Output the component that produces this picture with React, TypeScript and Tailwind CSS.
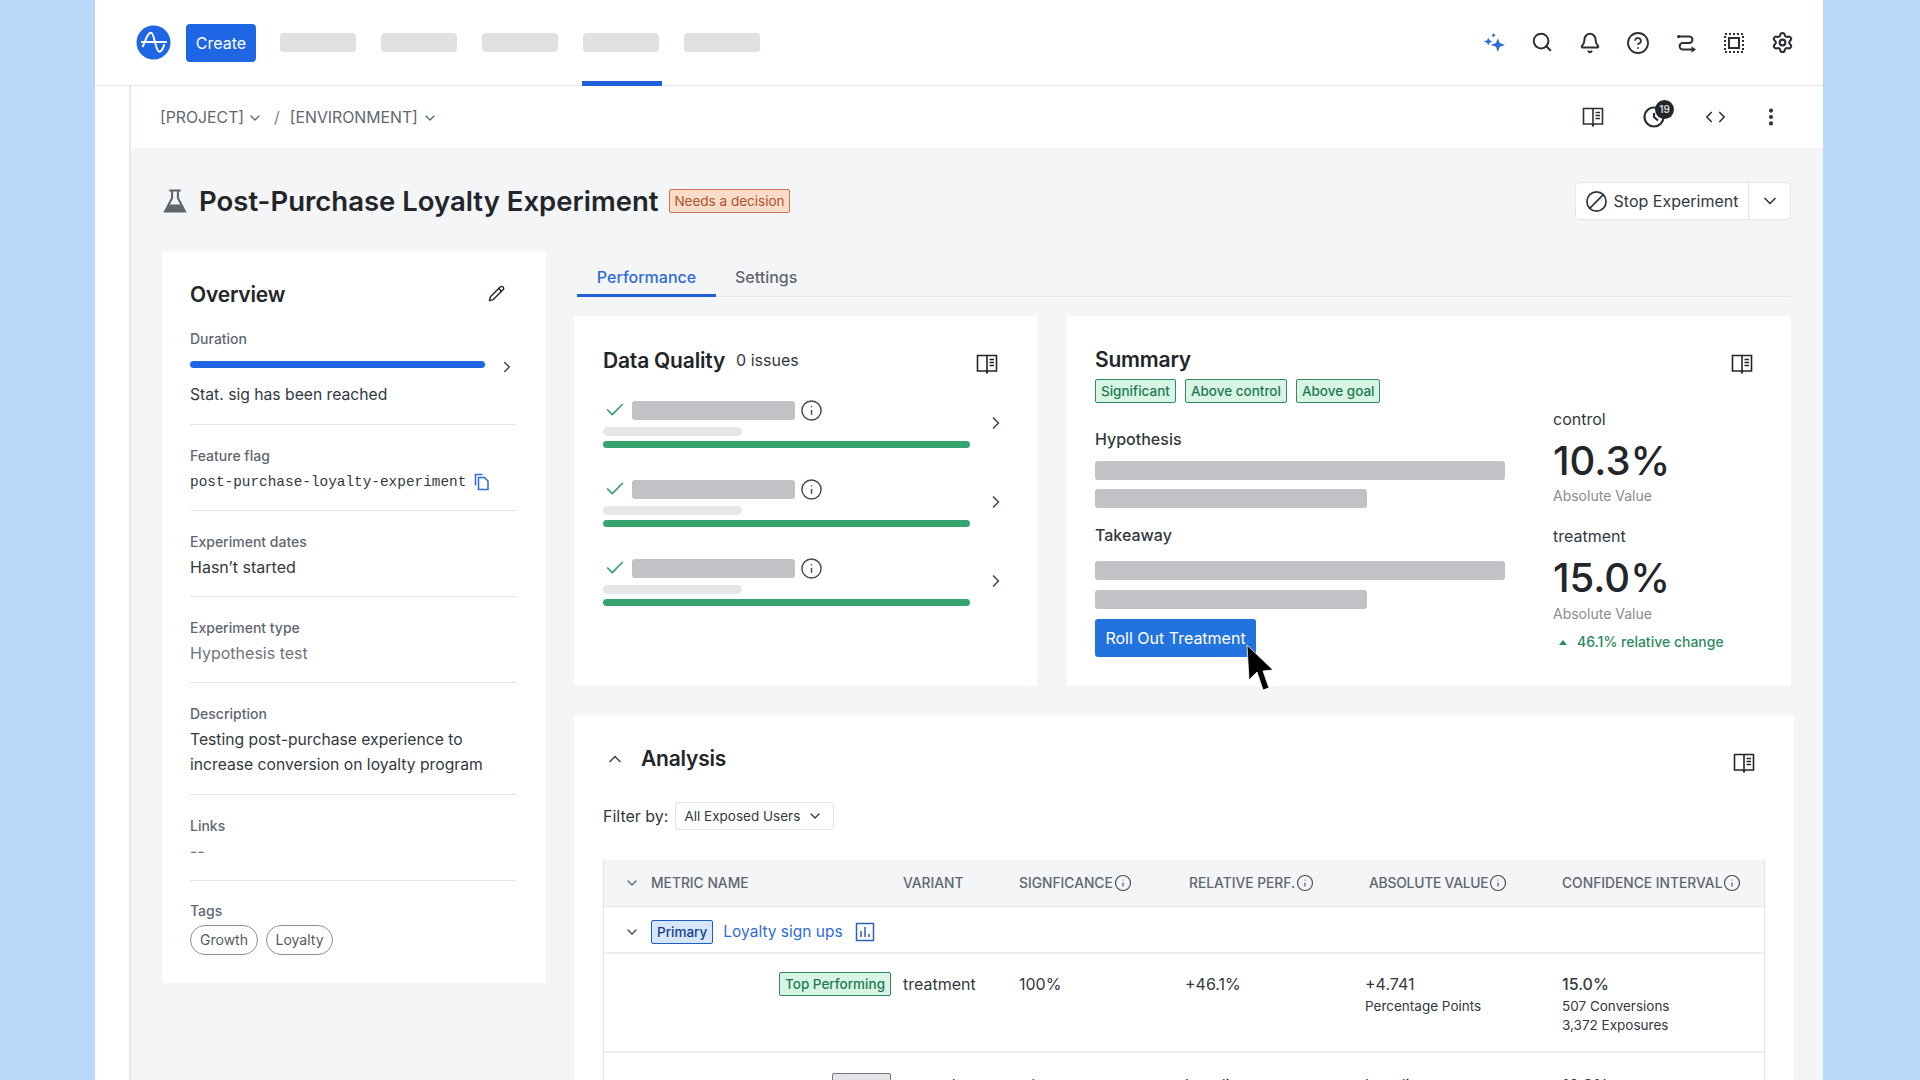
import {
  Ban,
  Bell,
  Check,
  ChevronDown,
  ChevronLeft,
  ChevronRight,
  ChevronUp,
  CircleHelp,
  EllipsisVertical,
  Info,
  Pencil,
  Search,
  Settings,
} from "lucide-react";

const font = { fontFamily: '"Inter", "Noto Sans", sans-serif' };
const tableCols = "grid-cols-[299px_116px_166px_180px_197px_1fr]";

function BookIcon({ className = "" }: { className?: string }) {
  return (
    <svg viewBox="0 0 22 22" fill="none" stroke="currentColor" strokeWidth="1.600" className={`h-[22px] w-[22px] ${className}`}>
      <path d="M11 2.500H1.500v15.500H11m0-15.500h9.500v15.500H11m0-15.500V20" />
      <path d="M9.500 18.500h3L11 21.500Z" fill="currentColor" stroke="none" />
      <path d="M13.500 6.500h4.500M13.500 9.500h4.500M13.500 12.500h4.500" strokeWidth="1.300" />
    </svg>
  );
}

function Logo() {
  return (
    <svg viewBox="0 0 36 36" className="h-[35px] w-[35px]">
      <circle cx="18" cy="18" r="17.500" fill="#1f66e5" />
      <path
        d="M7 22C10 15 12 8 15.500 8 19 8 20 27.500 24 27.500 26.500 27.500 28 23.500 29 20.500M6 17.500H31"
        fill="none"
        stroke="#fff"
        strokeWidth="2"
        strokeLinecap="round"
      />
    </svg>
  );
}

function Sparkles() {
  return (
    <svg viewBox="0 0 24 24" fill="#2f6bd9" className="h-[23px] w-[23px]">
      <path d="M15.500 7.500 17.500 12.500 23 14.500 17.500 16.500 15.500 22 13.500 16.500 8 14.500 13.500 12.500Z" />
      <path d="M5.500 7 6.800 9.700 10 11 6.800 12.300 5.500 15 4.200 12.300 1 11 4.200 9.700Z" />
      <path d="M11 2 11.800 3.700 13.500 4.500 11.800 5.300 11 7 10.200 5.300 8.500 4.500 10.200 3.700Z" />
    </svg>
  );
}

function RouteIcon() {
  return (
    <svg viewBox="0 0 24 24" fill="none" stroke="#2b2f36" strokeWidth="2.200" className="h-[22px] w-[22px]">
      <path d="M4 5H15.500a3.500 3.500 0 0 1 0 7h-7a3.500 3.500 0 0 0 0 7H19" />
      <path d="M18 15.500 23 19l-5 3.500Z" fill="#2b2f36" stroke="none" />
      <circle cx="4" cy="5" r="1.800" fill="#2b2f36" stroke="none" />
    </svg>
  );
}

function SelectionIcon() {
  return (
    <svg viewBox="0 0 22 22" fill="none" stroke="#2b2f36" className="h-[22px] w-[22px]">
      <rect x="2" y="2" width="18" height="18" strokeWidth="2" strokeDasharray="2 2" />
      <rect x="6" y="6" width="10" height="10" strokeWidth="2" />
    </svg>
  );
}

function FlaskIcon() {
  return (
    <svg viewBox="0 0 24 24" fill="none" stroke="#5f6670" strokeWidth="1.800" className="ml-[-1px] h-[28px] w-[28px]">
      <path d="M7 3h10M9.500 3v6.500L3.500 21h17l-6-11.500V3" />
      <path d="M7 15h10l2.500 5.500h-15Z" fill="#5f6670" stroke="none" />
    </svg>
  );
}

function CopyIcon() {
  return (
    <svg viewBox="0 0 18 18" fill="none" stroke="#2f6bd9" strokeWidth="1.500" className="h-[18px] w-[18px]">
      <path d="M2.500 12.500V1.500h7" />
      <path d="M5.500 4.500h6l3.500 3.500v8.500H5.500Z" />
    </svg>
  );
}

function ChartIcon() {
  return (
    <svg viewBox="0 0 20 20" fill="none" stroke="#2f5fb3" strokeWidth="1.500" className="h-[20px] w-[20px]">
      <rect x="1.500" y="1.500" width="17" height="17" />
      <path d="M6 15V9M10 15V5M14 15v-3" />
    </svg>
  );
}

function StatusTag({ children }: { children: string }) {
  return (
    <span className="flex h-6 items-center rounded-[2px] border border-[#2e8a62] bg-[#d8f5e4] px-[5px] text-[13.500px] font-medium text-[#1f7a54]">
      {children}
    </span>
  );
}

function Field({ label, children }: { label: string; children: React.ReactNode }) {
  return (
    <div className="border-b border-[#e3e5e8] pt-[21px] pb-[17px]">
      <p className="h-5 text-sm leading-5 font-medium text-[#5f6670]">{label}</p>
      <div className="mt-[3px] text-base leading-6 text-[#33383f]">{children}</div>
    </div>
  );
}

function QualityRow() {
  return (
    <div className="flex h-[79px] items-start">
      <div className="w-[367px]">
        <div className="flex h-5 items-center">
          <Check className="ml-[1px] h-[22px] w-[22px] text-[#35a072]" strokeWidth={1.800} />
          <div className="ml-[6px] h-[19px] w-[163px] rounded-[3px] bg-[#c0c2c5]" />
          <Info className="ml-[5px] h-[23px] w-[23px] text-[#444a52]" strokeWidth={1.500} />
        </div>
        <div className="mt-[7px] h-[9px] w-[139px] rounded-full bg-[#e5e6e8]" />
        <div className="mt-[5px] h-[7px] rounded-full bg-[#37a36f]" />
      </div>
      <ChevronRight className="mt-[13px] ml-[16px] h-5 w-5 text-[#444a52]" strokeWidth={2} />
    </div>
  );
}

function HeaderCell({ label, pad }: { label: string; pad?: string }) {
  return (
    <div className={`flex items-center gap-[1px] text-[13.800px] font-medium text-[#5f6670] ${pad ?? ""}`}>
      {label}
      <Info className="h-[18px] w-[18px] text-[#444a52]" strokeWidth={1.500} />
    </div>
  );
}

export default function App() {
  const topIcons = [
    <Sparkles key="sparkles" />,
    <Search key="search" className="-mt-[2px] h-[22px] w-[22px]" strokeWidth={2.200} />,
    <Bell key="bell" className="h-[22px] w-[22px]" strokeWidth={2.200} />,
    <CircleHelp key="help" className="h-[24px] w-[24px]" strokeWidth={1.800} />,
    <RouteIcon key="route" />,
    <SelectionIcon key="selection" />,
    <Settings key="settings" className="h-[23px] w-[23px]" strokeWidth={2.200} />,
  ];

  return (
    <div className="h-screen overflow-hidden bg-[#bad9fa] px-[95px] pr-[97px]" style={font}>
      <div className="relative h-full bg-[#f4f5f7]">
        <header className="flex h-[86px] items-center border-b border-[#e6e7e9] bg-white pr-[17px] pl-[41px] shadow-[0_1px_3px_rgba(0,0,0,0.06)]">
          <Logo />
          <button className="ml-[15px] h-[38px] w-[70px] rounded bg-[#1f66e5] text-base text-white">Create</button>
          <nav className="ml-6 flex gap-[25px]">
            {[0, 1, 2, 3, 4].map((n) => (
              <div key={n} className="h-[19px] w-[76px] rounded-[4px] bg-[#dfe1e3]" />
            ))}
          </nav>
          <div className="ml-auto flex items-center text-[#2b2f36]">
            {topIcons.map((icon) => (
              <div key={icon.key} className="flex w-12 justify-center">
                {icon}
              </div>
            ))}
          </div>
          <div className="absolute top-[81px] left-[487px] h-[5px] w-[80px] bg-[#1f5fd9]" />
        </header>

        <div className="flex h-[994px]">
          <div className="w-[36px] border-r-2 border-[#e8e9eb] bg-white" />
          <div className="min-w-0 flex-1">
            <div className="flex h-[62px] items-center bg-white pr-[41px] pl-[29px] text-[#5f6670]">
              <div className="flex translate-y-px items-center text-[15.800px]">
                <span>[PROJECT]</span>
                <ChevronDown className="ml-[3px] h-4 w-4" />
                <span className="ml-[11px] text-[#7b818a]">/</span>
                <span className="ml-[10px]">[ENVIRONMENT]</span>
                <ChevronDown className="ml-1 h-4 w-4" />
              </div>
              <div className="ml-auto flex items-center text-[#2b2f36]">
                <BookIcon className="mr-[38px]" />
                <div className="relative mr-[34px]">
                  <svg viewBox="0 0 24 24" fill="none" stroke="#2b2f36" strokeWidth="2.200" className="h-6 w-6">
                    <circle cx="12" cy="12" r="9.500" />
                    <path d="M12 8v4l4 3.500" />
                  </svg>
                  <span className="absolute top-[-5px] left-[13px] flex h-[19px] w-[19px] items-center justify-center rounded-full bg-[#23262b] text-[10px] font-semibold text-[#d5d7da]">
                    19
                  </span>
                </div>
                <div className="mr-[29px] flex items-center">
                  <ChevronLeft className="-mr-1 h-[18px] w-[18px]" strokeWidth={2.200} />
                  <ChevronRight className="-ml-[1px] h-[18px] w-[18px]" strokeWidth={2.200} />
                </div>
                <EllipsisVertical className="h-[22px] w-[22px]" strokeWidth={2.500} />
              </div>
            </div>

            <div className="pr-[32px] pl-[31px]">
              <div className="mt-[35px] flex h-[36px] items-center">
                <div className="flex w-[36px] items-center">
                  <FlaskIcon />
                </div>
                <h1 className="ml-[1px] text-[27.500px] leading-9 font-semibold text-[#22262b]">Post-Purchase Loyalty Experiment</h1>
                <span className="ml-[11px] flex h-6 items-center rounded-[2px] border border-[#c9744c] bg-[#fcdcc8] px-[4px] text-[13.500px] text-[#a9552e]">
                  Needs a decision
                </span>
                <div className="mr-[1px] ml-auto flex h-[36px] items-center rounded bg-white text-[#33383f] shadow-[0_0_2px_rgba(0,0,0,0.2)]">
                  <div className="flex h-full w-[173px] items-center justify-center gap-[6px] border-r border-[#e3e5e8] pr-[1px] text-base">
                    <Ban className="h-[23px] w-[23px] -scale-x-100" strokeWidth={1.800} />
                    Stop Experiment
                  </div>
                  <div className="flex w-[41px] justify-center">
                    <ChevronDown className="h-5 w-5" strokeWidth={2} />
                  </div>
                </div>
              </div>

              <div className="mt-[32px] flex gap-[28px]">
                <aside className="h-[732px] w-[384px] shrink-0 rounded-[2px] bg-white pr-[30px] pl-[28px]">
                  <div className="flex h-[80px] items-start justify-between pt-[30px]">
                    <h2 className="text-[21px] leading-7 font-semibold tracking-[-0.2px] text-[#22262b]">Overview</h2>
                    <Pencil className="mt-[4px] mr-[11px] h-[17px] w-[17px] text-[#22262b]" strokeWidth={2} />
                  </div>
                  <div className="border-b border-[#e3e5e8] pb-[17px]">
                    <p className="h-4 text-sm leading-4 font-medium text-[#5f6670]">Duration</p>
                    <div className="mt-[14px] flex h-[7px] items-start">
                      <div className="h-[7px] w-[297px] rounded-full bg-[#1f66e5]" />
                      <ChevronRight className="mt-[-3px] ml-[13px] h-[18px] w-[18px] shrink-0 text-[#444a52]" strokeWidth={2} />
                    </div>
                    <p className="mt-[15px] text-[15.700px] leading-6 text-[#33383f]">Stat. sig has been reached</p>
                  </div>
                  <Field label="Feature flag">
                    <div className="flex translate-y-px items-center gap-[7px]">
                      <span className="text-[14.400px] text-[#33383f]" style={{ fontFamily: '"Liberation Mono", monospace' }}>
                        post-purchase-loyalty-experiment
                      </span>
                      <CopyIcon />
                    </div>
                  </Field>
                  <Field label="Experiment dates">Hasn’t started</Field>
                  <Field label="Experiment type">
                    <span className="text-[#6f757d]">Hypothesis test</span>
                  </Field>
                  <Field label="Description">
                    <span className="text-[15.700px]">
                      Testing post-purchase experience to
                      <br />
                      increase conversion on loyalty program
                    </span>
                  </Field>
                  <Field label="Links">
                    <span className="text-[#6f757d]">--</span>
                  </Field>
                  <div className="pt-5">
                    <p className="h-5 text-sm leading-5 font-medium text-[#5f6670]">Tags</p>
                    <div className="mt-1 flex gap-2">
                      <span className="flex h-[30px] w-[68px] items-center justify-center rounded-full border border-[#8a8f96] text-sm text-[#555b63]">Growth</span>
                      <span className="flex h-[30px] w-[67px] items-center justify-center rounded-full border border-[#8a8f96] text-sm text-[#555b63]">Loyalty</span>
                    </div>
                  </div>
                </aside>

                <div className="relative min-w-0 flex-1">
                  <div className="ml-[3px] flex h-[46px] border-b border-[#e3e5e8]">
                    <div className="flex h-[46px] w-[139px] items-center justify-center border-b-[3px] border-[#1f5fd9] pt-[9px] text-base font-medium text-[#2f6bd9]">
                      Performance
                    </div>
                    <div className="ml-[19px] flex items-center pt-[6px] text-base font-medium text-[#5f6670]">Settings</div>
                  </div>

                  <div className="mt-[19px] flex h-[370px] gap-[30px]">
                    <section className="w-[463px] rounded-[2px] bg-white pt-[28px] pl-[29px]">
                      <div className="flex h-[34px] items-center">
                        <h2 className="text-[21px] font-semibold tracking-[-0.2px] text-[#22262b]">Data Quality</h2>
                        <span className="ml-[11px] -translate-y-px text-base text-[#33383f]">0 issues</span>
                        <BookIcon className="mt-[6px] mr-[39px] ml-auto text-[#22262b]" />
                      </div>
                      <div className="mt-[22px]">
                        <QualityRow />
                        <QualityRow />
                        <QualityRow />
                      </div>
                    </section>

                    <section className="relative flex-1 rounded-[2px] bg-white pt-[30px] pl-[28px]">
                      <div className="flex">
                        <div className="w-[458px]">
                          <h2 className="text-[21px] leading-[28px] font-semibold tracking-[-0.2px] text-[#22262b]">Summary</h2>
                          <div className="mt-[5px] flex gap-[9px]">
                            <StatusTag>Significant</StatusTag>
                            <StatusTag>Above control</StatusTag>
                            <StatusTag>Above goal</StatusTag>
                          </div>
                          <p className="mt-[24px] text-base leading-6 font-medium text-[#33383f]">Hypothesis</p>
                          <div className="mt-[10px] h-[19px] w-[410px] rounded-[3px] bg-[#c0c2c5]" />
                          <div className="mt-[9px] h-[19px] w-[272px] rounded-[3px] bg-[#c0c2c5]" />
                          <p className="mt-[15px] text-base leading-6 font-medium text-[#33383f]">Takeaway</p>
                          <div className="mt-[14px] h-[19px] w-[410px] rounded-[3px] bg-[#c0c2c5]" />
                          <div className="mt-[10px] h-[19px] w-[272px] rounded-[3px] bg-[#c0c2c5]" />
                          <button className="mt-[10px] h-[38px] w-[161px] rounded-[3px] bg-[#2273de] text-base text-white">Roll Out Treatment</button>
                        </div>
                        <div className="pt-[61px]">
                          <p className="text-base leading-6 text-[#33383f]">control</p>
                          <p className="mt-[6px] text-[40px] leading-[48px] font-medium text-[#22262b]">10.3%</p>
                          <p className="mt-[1px] text-sm leading-5 text-[#868c94]">Absolute Value</p>
                          <p className="mt-[18px] text-base leading-6 text-[#33383f]">treatment</p>
                          <p className="mt-[6px] text-[40px] leading-[48px] font-medium text-[#22262b]">15.0%</p>
                          <p className="mt-[2px] text-sm leading-5 text-[#868c94]">Absolute Value</p>
                          <p className="mt-[8px] flex items-center text-sm leading-5 font-medium text-[#2e8a62]">
                            <span className="mr-[10px] ml-[6px] h-0 w-0 border-x-[4px] border-b-[5px] border-x-transparent border-b-[#2e8a62]" />
                            46.1% relative change
                          </p>
                        </div>
                      </div>
                      <BookIcon className="absolute top-[37px] right-[38px] text-[#22262b]" />
                    </section>
                  </div>

                  <section className="mt-[29px] -mr-[3px] rounded-[2px] bg-white pr-[29px] pl-[29px]">
                    <div className="flex h-[87px] items-center pt-[1px]">
                      <ChevronUp className="ml-[2px] h-5 w-5 text-[#444a52]" strokeWidth={2} />
                      <h2 className="ml-[16px] text-[21px] font-semibold tracking-[-0.2px] text-[#22262b]">Analysis</h2>
                      <BookIcon className="mt-[8px] mr-[10px] ml-auto text-[#22262b]" />
                    </div>
                    <div className="flex items-center">
                      <span className="text-base text-[#33383f]">Filter by:</span>
                      <div className="ml-[7px] flex h-7 w-[159px] items-center rounded-[3px] border border-[#dfe1e4] pl-[8px] text-[13.500px] text-[#33383f]">
                        All Exposed Users
                        <ChevronDown className="ml-[7px] h-4 w-4" strokeWidth={2} />
                      </div>
                    </div>
                    <div className="mt-[30px] border-x border-[#e3e5e8]">
                      <div className={`grid h-[47px] ${tableCols} items-center border-b border-[#e3e5e8] bg-[#f4f5f7]`}>
                        <div className="flex items-center text-[13.800px] font-medium text-[#5f6670]">
                          <ChevronDown className="ml-[20px] h-4 w-4" strokeWidth={2} />
                          <span className="ml-[11px]">METRIC NAME</span>
                        </div>
                        <div className="text-[13.800px] font-medium text-[#5f6670]">VARIANT</div>
                        <HeaderCell label="SIGNFICANCE" />
                        <HeaderCell label="RELATIVE PERF." pad="pl-1" />
                        <HeaderCell label="ABSOLUTE VALUE" pad="pl-[4px] tracking-[-0.2px]" />
                        <HeaderCell label="CONFIDENCE INTERVAL" />
                      </div>
                      <div className="flex h-[47px] items-center border-b-2 border-[#eceef0] pt-[5px]">
                        <ChevronDown className="ml-[20px] h-4 w-4 text-[#444a52]" strokeWidth={2} />
                        <span className="ml-[11px] flex h-6 items-center rounded-[2px] border border-[#1f5fc4] bg-[#d6e6fd] px-[5px] text-[13.500px] font-medium text-[#163f8a]">Primary</span>
                        <span className="ml-[10px] text-[15.500px] text-[#2f6bd9]">Loyalty sign ups</span>
                        <span className="ml-[12px]">
                          <ChartIcon />
                        </span>
                      </div>
                      <div className={`grid h-[99px] ${tableCols} border-b-2 border-[#eceef0] pt-[18px] text-base leading-6 text-[#33383f]`}>
                        <div className="flex justify-end pr-[12px]">
                          <StatusTag>Top Performing</StatusTag>
                        </div>
                        <div>treatment</div>
                        <div>100%</div>
                        <div>+46.1%</div>
                        <div>
                          +4.741
                          <p className="mt-[1px] text-[13.500px] leading-[19px] text-[#33383f]">Percentage Points</p>
                        </div>
                        <div>
                          <span className="font-medium">15.0%</span>
                          <p className="mt-[1px] text-[13.500px] leading-[19px]">507 Conversions</p>
                          <p className="text-[13.500px] leading-[19px]">3,372 Exposures</p>
                        </div>
                      </div>
                      <div className={`grid h-[99px] ${tableCols} pt-[20px] text-base leading-6 text-[#33383f]`}>
                        <div className="flex justify-end pr-[12px]">
                          <span className="flex h-6 items-center rounded-[2px] border border-[#6f757d] bg-[#e3e5e8] px-[5px] text-[13.500px] font-medium text-[#444a52]">Control</span>
                        </div>
                        <div>control</div>
                        <div>n/a</div>
                        <div>baseline</div>
                        <div>baseline</div>
                        <div className="font-medium">10.3%</div>
                      </div>
                    </div>
                  </section>

                  <svg viewBox="0 0 32 50" className="absolute top-[393px] left-[670px] h-[50px] w-[32px]">
                    <path d="M3 1 5 36 13 28 19 46 25 44 19 27 29 26Z" fill="#000" stroke="#fff" strokeWidth="0.800" />
                  </svg>
                </div>
              </div>
            </div>
          </div>
        </div>
      </div>
    </div>
  );
}
